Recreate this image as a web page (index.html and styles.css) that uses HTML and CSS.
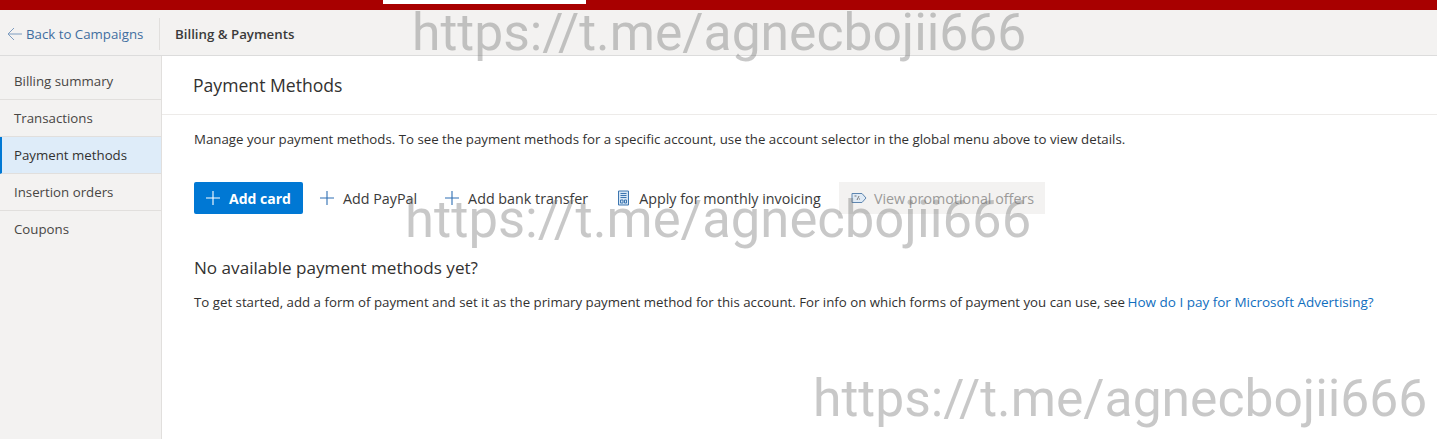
FILE: index.html
```html
<!DOCTYPE html>
<html lang="en">
<head>
<meta charset="utf-8">
<title>Payment Methods</title>
<link rel="stylesheet" href="styles.css">
</head>
<body>
<div class="topbar"><div class="topbar-tab"></div></div>
<header class="subbar">
  <a class="back" href="#">
    <svg class="back-icon" width="16" height="14" viewBox="0 0 16 14"><path d="M7 1 1 7l6 6M1 7h14" fill="none" stroke="#7d9cc0" stroke-width="1"/></svg>
    <span>Back to Campaigns</span>
  </a>
  <div class="crumb">Billing &amp; Payments</div>
</header>
<div class="main">
  <nav class="side">
    <a class="side-item" href="#">Billing summary</a>
    <a class="side-item" href="#">Transactions</a>
    <a class="side-item active" href="#">Payment methods</a>
    <a class="side-item" href="#">Insertion orders</a>
    <a class="side-item last" href="#">Coupons</a>
  </nav>
  <main class="content">
    <h1 class="title">Payment Methods</h1>
    <div class="body">
      <p class="intro">Manage your payment methods. To see the payment methods for a specific account, use the account selector in the global menu above to view details.</p>
      <div class="actions">
        <button class="btn primary"><svg width="16" height="16" viewBox="0 0 16 16"><path d="M8 1v14M1 8h14" stroke="#fff" stroke-width="1.1"/></svg>Add card</button>
        <button class="btn link paypal"><svg width="16" height="16" viewBox="0 0 16 16"><path d="M8 1v14M1 8h14" stroke="#2f6fb3" stroke-width="1.1"/></svg>Add PayPal</button>
        <button class="btn link bank"><svg width="16" height="16" viewBox="0 0 16 16"><path d="M8 1v14M1 8h14" stroke="#2f6fb3" stroke-width="1.1"/></svg>Add bank transfer</button>
        <button class="btn link invoice"><svg width="13" height="16" viewBox="0 0 13 16"><path d="M1.5 1h10v14h-10z" fill="#d6e6f5" stroke="#3d76b0"/><path d="M3.500 3.500h6M3.500 5.500h6M3.500 7.500h6" stroke="#3d76b0"/><path d="M3.500 10h2.500v3h-2.500zM7.500 10h2v3h-2z" fill="none" stroke="#3d76b0"/></svg>Apply for monthly invoicing</button>
        <button class="btn disabled"><svg width="16" height="12" viewBox="0 0 16 12"><path d="M1 1.500h10l4 4.500-4 4.500H1z" fill="#dfeaf5" stroke="#5e86b0"/><path d="M3.500 4h2M6 8l2-4M8 7h1" stroke="#777"/></svg>View promotional offers</button>
      </div>
      <h2 class="empty-title">No available payment methods yet?</h2>
      <p class="empty-text">To get started, add a form of payment and set it as the primary payment method for this account. For info on which forms of payment you can use, see <a class="help" href="#">How do I pay for Microsoft Advertising?</a></p>
    </div>
  </main>
</div>
<div class="wm wm1">https://t.me/agnecbojii666</div>
<div class="wm wm2">https://t.me/agnecbojii666</div>
<div class="wm wm3">https://t.me/agnecbojii666</div>
</body>
</html>
```
FILE: styles.css
```css
* { box-sizing: border-box; }
html, body { margin: 0; height: 439px; overflow: hidden; }
body { font-family: "Open Sans", "Noto Sans", sans-serif; font-size: 13.27px; color: #323130; background: #fff; position: relative; }
a { text-decoration: none; }
.topbar { height: 10px; background: #a80000; padding-left: 383px; }
.topbar-tab { width: 203px; height: 4px; background: #fff; }
.subbar { height: 46px; background: #f3f2f1; border-bottom: 1px solid #dcdcdc; display: flex; align-items: center; padding-top: 2px; }
.back { width: 160px; height: 32px; display: flex; align-items: center; gap: 3px; padding-left: 7px; color: #3f6e9f; border-right: 1px solid #e1dfdd; white-space: nowrap; }
.crumb { margin-left: 15px; font-weight: 600; color: #3a3a3a; }
.main { display: flex; height: 383px; }
.side { width: 162px; background: #f3f2f1; border-right: 1px solid #e1dfdd; padding-top: 7px; }
.side-item { display: flex; align-items: center; height: 37px; padding-left: 14px; padding-bottom: 1px; color: #484644; border-bottom: 1px solid #e1dfdd; }
.side-item.active { background: #deecf9; border-left: 2px solid #0078d4; padding-left: 12px; color: #323130; font-weight: 500; }
.side-item.last { border-bottom: 0; }
.content { flex: 1; min-width: 0; }
.title { margin: 0; height: 59px; padding: 17px 0 0 31px; font-size: 17.6px; line-height: 24px; font-weight: 500; color: #323130; border-bottom: 1px solid #edebe9; }
.body { padding: 14px 32px 0; }
.intro { margin: 0; line-height: 20px; }
.actions { display: flex; align-items: center; margin-top: 33px; height: 32px; }
.btn { display: inline-flex; align-items: center; height: 32px; border: 0; background: none; font: inherit; font-size: 14.3px; color: #3a3a3a; padding: 0; white-space: nowrap; }
.btn svg { flex: none; }
.primary { width: 109px; background: #0078d4; color: #fff; font-weight: 700; font-size: 14px; border-radius: 2px; padding-left: 11px; gap: 8px; }
.paypal { margin-left: 16px; gap: 8px; }
.bank { margin-left: 27px; gap: 8px; }
.invoice { margin-left: 29px; gap: 9px; }
.disabled { margin-left: 18px; width: 206px; background: #f3f2f1; color: #9b9a99; padding-left: 12px; gap: 7px; }
.empty-title { margin: 42px 0 0; font-size: 17.1px; line-height: 24px; font-weight: 400; color: #323130; }
.empty-text { margin: 12px 0 0; line-height: 20px; white-space: nowrap; }
.help { color: #106ebe; font-size: 13.5px; margin-left: -1px; }
.wm { position: absolute; font-family: "Roboto", sans-serif; font-weight: 400; line-height: 60px; color: rgba(110,110,110,.38); white-space: nowrap; pointer-events: none; }
.wm1 { left: 412px; top: 3px; font-size: 51.600px; }
.wm2 { left: 405px; top: 189px; font-size: 52.600px; }
.wm3 { left: 813px; top: 369px; font-size: 51.600px; }
```
